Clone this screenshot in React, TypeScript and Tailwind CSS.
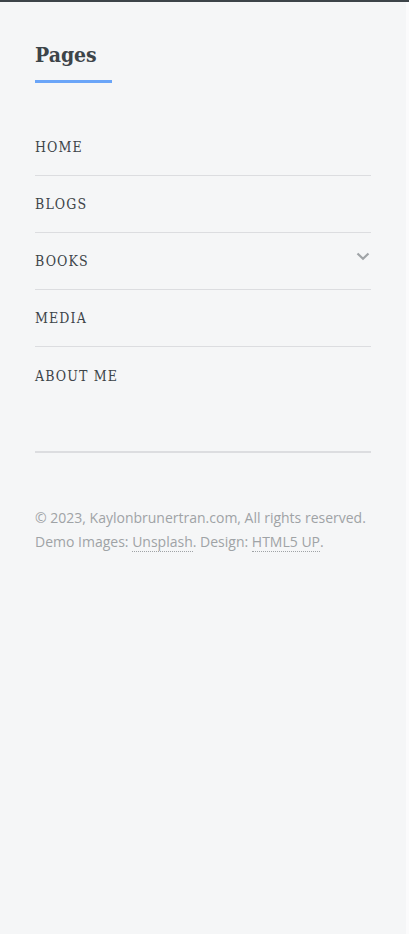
import React from "react";

const slab = { fontFamily: '"DejaVu Serif Condensed", "DejaVu Serif", serif' };

export default function App() {
  const items = ["HOME", "BLOGS", "BOOKS", "MEDIA", "ABOUT ME"];
  return (
    <div className="min-h-[934px] bg-[#f5f6f7] border-t-2 border-[#3d4449] flex">
      <div className="flex-1 px-[35px] pt-[36px]">
        <header>
          <h2
            className="text-[21px] font-bold text-[#3d4449] leading-[33px]"
            style={slab}
          >
            Pages
          </h2>
          <div className="mt-[9px] w-[77px] h-[3px] bg-[#6aa5f8]" />
        </header>
        <ul className="mt-[36px]">
          {items.map((t, i) => (
            <li
              key={t}
              className={`h-[57px] flex items-center justify-between ${
                i < items.length - 1 ? "border-b border-[#dcdde0]" : ""
              }`}
            >
              <span
                className="text-[14px] tracking-[0.08em] text-[#3d4449] leading-none"
                style={slab}
              >
                {t}
              </span>
              {t === "BOOKS" && (
                <svg
                  width="14"
                  height="9"
                  viewBox="0 0 14 9"
                  className="mt-[-9px] mr-[1px]"
                >
                  <path
                    d="M1.5 1.5 L7 6.8 L12.5 1.5"
                    fill="none"
                    stroke="#a0a4a7"
                    strokeWidth="2.2"
                  />
                </svg>
              )}
            </li>
          ))}
        </ul>
        <div className="mt-[47px] h-[2px] bg-[#dcdde0]" />
        <footer
          className="mt-[53px] text-[14px] leading-[24px] text-[#9fa3a6]"
          style={{ fontFamily: '"Open Sans", sans-serif' }}
        >
          <p>© 2023, Kaylonbrunertran.com, All rights reserved.</p>
          <p>
            Demo Images:{" "}
            <a className="border-b border-dotted border-[#9fa3a6]">Unsplash</a>.
            Design:{" "}
            <a className="border-b border-dotted border-[#9fa3a6]">HTML5 UP</a>.
          </p>
        </footer>
      </div>
      <div className="w-[3px] bg-[#fbfbfc]" />
    </div>
  );
}
